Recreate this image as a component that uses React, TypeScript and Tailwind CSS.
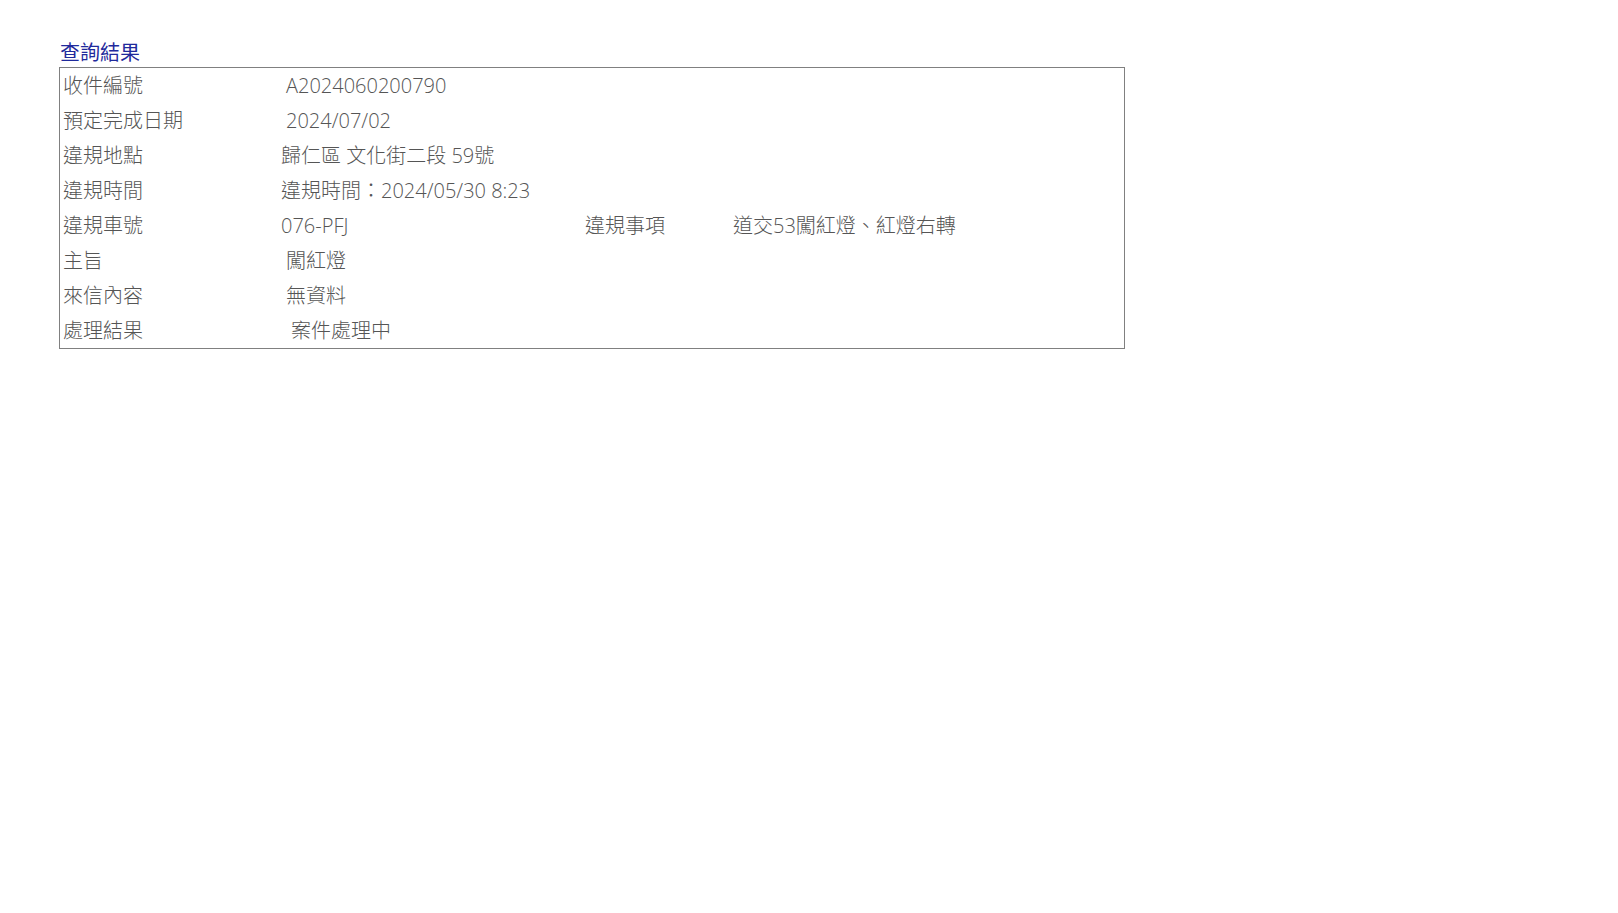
const FONT = { fontFamily: '"Open Sans", "Noto Sans CJK TC", sans-serif' };

type Row = { label: string; value: string; pad: string; extra?: [string, string] };

const rows: Row[] = [
  { label: "收件編號", value: "A2024060200790", pad: "pl-[5px]" },
  { label: "預定完成日期", value: "2024/07/02", pad: "pl-[5px]" },
  { label: "違規地點", value: "歸仁區 文化街二段 59號", pad: "pl-0" },
  { label: "違規時間", value: "違規時間：2024/05/30 8:23", pad: "pl-0" },
  { label: "違規車號", value: "076-PFJ", pad: "pl-0", extra: ["違規事項", "道交53闖紅燈、紅燈右轉"] },
  { label: "主旨", value: "闖紅燈", pad: "pl-[5px]" },
  { label: "來信內容", value: "無資料", pad: "pl-[5px]" },
  { label: "處理結果", value: "案件處理中", pad: "pl-[10px]" },
];

export default function App() {
  return (
    <div className="min-h-screen bg-white pt-[41px] pl-[59px]" style={FONT}>
      <h2 className="text-[20px] leading-[24px] mb-[2px] pl-[1px] text-[#1f2a9c] font-normal">
        查詢結果
      </h2>
      <div className="w-[1066px] border border-[#808080] text-[20px] font-light text-[#555555]">
        {rows.map((r) => (
          <div key={r.label} className="flex h-[35px] items-center">
            <div className="w-[221px] shrink-0 pl-[3px]">{r.label}</div>
            {r.extra ? (
              <>
                <div className={`w-[304px] shrink-0 ${r.pad}`}>{r.value}</div>
                <div className="w-[148px] shrink-0">{r.extra[0]}</div>
                <div>{r.extra[1]}</div>
              </>
            ) : (
              <div className={r.pad}>{r.value}</div>
            )}
          </div>
        ))}
      </div>
    </div>
  );
}
